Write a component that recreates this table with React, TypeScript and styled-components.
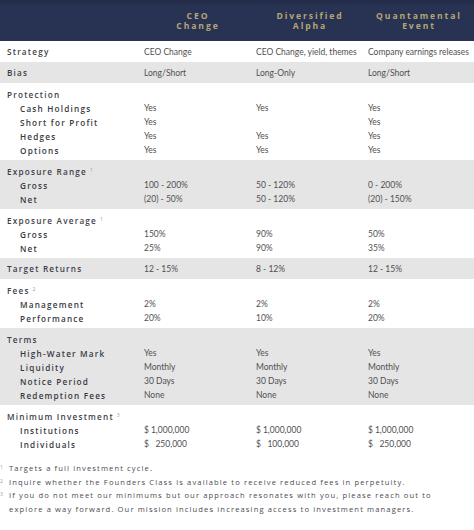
import React from "react";
import styled, { createGlobalStyle } from "styled-components";

type Money = { amount: string };
type Cell = string | Money | null;

interface Line {
  label: string;
  values: Cell[];
}

interface Section {
  title: string;
  note?: string;
  shaded: boolean;
  values?: Cell[];
  items?: Line[];
}

const GlobalStyle = createGlobalStyle`
  html, body {
    margin: 0;
    padding: 0;
    background: #ffffff;
  }
  body {
    font-family: "Lato", "Liberation Sans", sans-serif;
    -webkit-font-smoothing: antialiased;
  }
`;

const Page = styled.div`
  width: 474px;
  height: 530px;
  overflow: hidden;
  background: #ffffff;
`;

const Columns = styled.div`
  display: grid;
  grid-template-columns: 144px 112px 112px 106px;
`;

const HeaderBand = styled(Columns)`
  height: 41px;
  background: linear-gradient(#222b47 0px, #283353 6px, #283353 100%);
  align-items: center;
`;

const FundName = styled.div`
  text-align: center;
  color: #b6a574;
  font-family: "Open Sans", "Liberation Sans", sans-serif;
  font-weight: 700;
  font-size: 8.6px;
  line-height: 10.5px;
  letter-spacing: 1.9px;
  padding-top: 1px;
  padding-right: 4px;
`;

const Group = styled.div<{ $shaded: boolean; $single?: boolean }>`
  background: ${(p) => (p.$shaded ? "#e5e5e5" : "#ffffff")};
  padding: ${(p) => (p.$single ? "0" : "4px 0 3px")};
`;

const Row = styled(Columns)<{ $tall?: boolean }>`
  height: ${(p) => (p.$tall ? "21px" : "14px")};
  align-items: center;
`;

const Label = styled.div<{ $indent?: boolean }>`
  padding-left: ${(p) => (p.$indent ? "20px" : "7px")};
  font-family: "Open Sans", "Liberation Sans", sans-serif;
  font-weight: 600;
  font-size: 8.2px;
  letter-spacing: 1.2px;
  color: ${(p) => (p.$indent ? "#383943" : "#3e3f49")};
  white-space: nowrap;
`;

const Note = styled.sup`
  font-size: 5px;
  color: #9a9aa2;
  margin-left: 3px;
  vertical-align: 3px;
  font-weight: 400;
`;

const Value = styled.div`
  font-family: "Lato", "Liberation Sans", sans-serif;
  font-size: 8.5px;
  color: #505054;
  white-space: nowrap;
`;

const Amount = styled.span`
  display: inline-grid;
  grid-template-columns: auto 36px;
  column-gap: 2px;
`;

const AmountDigits = styled.span`
  text-align: right;
`;

const Footnotes = styled.div`
  padding: 8px 0 0 0;
  display: flex;
  flex-direction: column;
`;

const Footnote = styled.div`
  display: grid;
  grid-template-columns: 9px 1fr;
  padding-right: 30px;
  font-family: "Open Sans", "Liberation Sans", sans-serif;
  font-size: 7.6px;
  line-height: 13.6px;
  letter-spacing: 1.12px;
  color: #4a4a52;
`;

const Marker = styled.span`
  font-size: 5px;
  color: #9a9aa2;
  line-height: 10px;
`;

const funds = [
  ["CEO", "Change"],
  ["Diversified", "Alpha"],
  ["Quantamental", "Event"],
];

const sections: Section[] = [
  {
    title: "Strategy",
    shaded: false,
    values: ["CEO Change", "CEO Change, yield, themes", "Company earnings releases"],
  },
  { title: "Bias", shaded: true, values: ["Long/Short", "Long-Only", "Long/Short"] },
  {
    title: "Protection",
    shaded: false,
    items: [
      { label: "Cash Holdings", values: ["Yes", "Yes", "Yes"] },
      { label: "Short for Profit", values: ["Yes", null, "Yes"] },
      { label: "Hedges", values: ["Yes", "Yes", "Yes"] },
      { label: "Options", values: ["Yes", "Yes", "Yes"] },
    ],
  },
  {
    title: "Exposure Range",
    note: "1",
    shaded: true,
    items: [
      { label: "Gross", values: ["100 - 200%", "50 - 120%", "0 - 200%"] },
      { label: "Net", values: ["(20) - 50%", "50 - 120%", "(20) - 150%"] },
    ],
  },
  {
    title: "Exposure Average",
    note: "1",
    shaded: false,
    items: [
      { label: "Gross", values: ["150%", "90%", "50%"] },
      { label: "Net", values: ["25%", "90%", "35%"] },
    ],
  },
  { title: "Target Returns", shaded: true, values: ["12 - 15%", "8 - 12%", "12 - 15%"] },
  {
    title: "Fees",
    note: "2",
    shaded: false,
    items: [
      { label: "Management", values: ["2%", "2%", "2%"] },
      { label: "Performance", values: ["20%", "10%", "20%"] },
    ],
  },
  {
    title: "Terms",
    shaded: true,
    items: [
      { label: "High-Water Mark", values: ["Yes", "Yes", "Yes"] },
      { label: "Liquidity", values: ["Monthly", "Monthly", "Monthly"] },
      { label: "Notice Period", values: ["30 Days", "30 Days", "30 Days"] },
      { label: "Redemption Fees", values: ["None", "None", "None"] },
    ],
  },
  {
    title: "Minimum Investment",
    note: "3",
    shaded: false,
    items: [
      {
        label: "Institutions",
        values: [{ amount: "1,000,000" }, { amount: "1,000,000" }, { amount: "1,000,000" }],
      },
      {
        label: "Individuals",
        values: [{ amount: "250,000" }, { amount: "100,000" }, { amount: "250,000" }],
      },
    ],
  },
];

const notes = [
  ["1", "Targets a full investment cycle."],
  ["2", "Inquire whether the Founders Class is available to receive reduced fees in perpetuity."],
  [
    "3",
    "If you do not meet our minimums but our approach resonates with you, please reach out to explore a way forward. Our mission includes increasing access to investment managers.",
  ],
];

const renderCell = (cell: Cell, i: number) => {
  if (cell === null) return <Value key={i} />;
  if (typeof cell === "string") return <Value key={i}>{cell}</Value>;
  return (
    <Value key={i}>
      <Amount>
        <span>$</span>
        <AmountDigits>{cell.amount}</AmountDigits>
      </Amount>
    </Value>
  );
};

const App: React.FC = () => {
  return (
    <Page>
      <GlobalStyle />
      <HeaderBand>
        <div />
        {funds.map(([a, b]) => (
          <FundName key={a}>
            {a}
            <br />
            {b}
          </FundName>
        ))}
      </HeaderBand>

      {sections.map((s) =>
        s.values ? (
          <Group key={s.title} $shaded={s.shaded} $single>
            <Row $tall>
              <Label>{s.title}</Label>
              {s.values.map(renderCell)}
            </Row>
          </Group>
        ) : (
          <Group key={s.title} $shaded={s.shaded}>
            <Row>
              <Label>
                {s.title}
                {s.note && <Note>{s.note}</Note>}
              </Label>
            </Row>
            {s.items?.map((item) => (
              <Row key={item.label}>
                <Label $indent>{item.label}</Label>
                {item.values.map(renderCell)}
              </Row>
            ))}
          </Group>
        )
      )}

      <Footnotes>
        {notes.map(([n, text]) => (
          <Footnote key={n}>
            <Marker>{n}</Marker>
            <span>{text}</span>
          </Footnote>
        ))}
      </Footnotes>
    </Page>
  );
};

export default App;
